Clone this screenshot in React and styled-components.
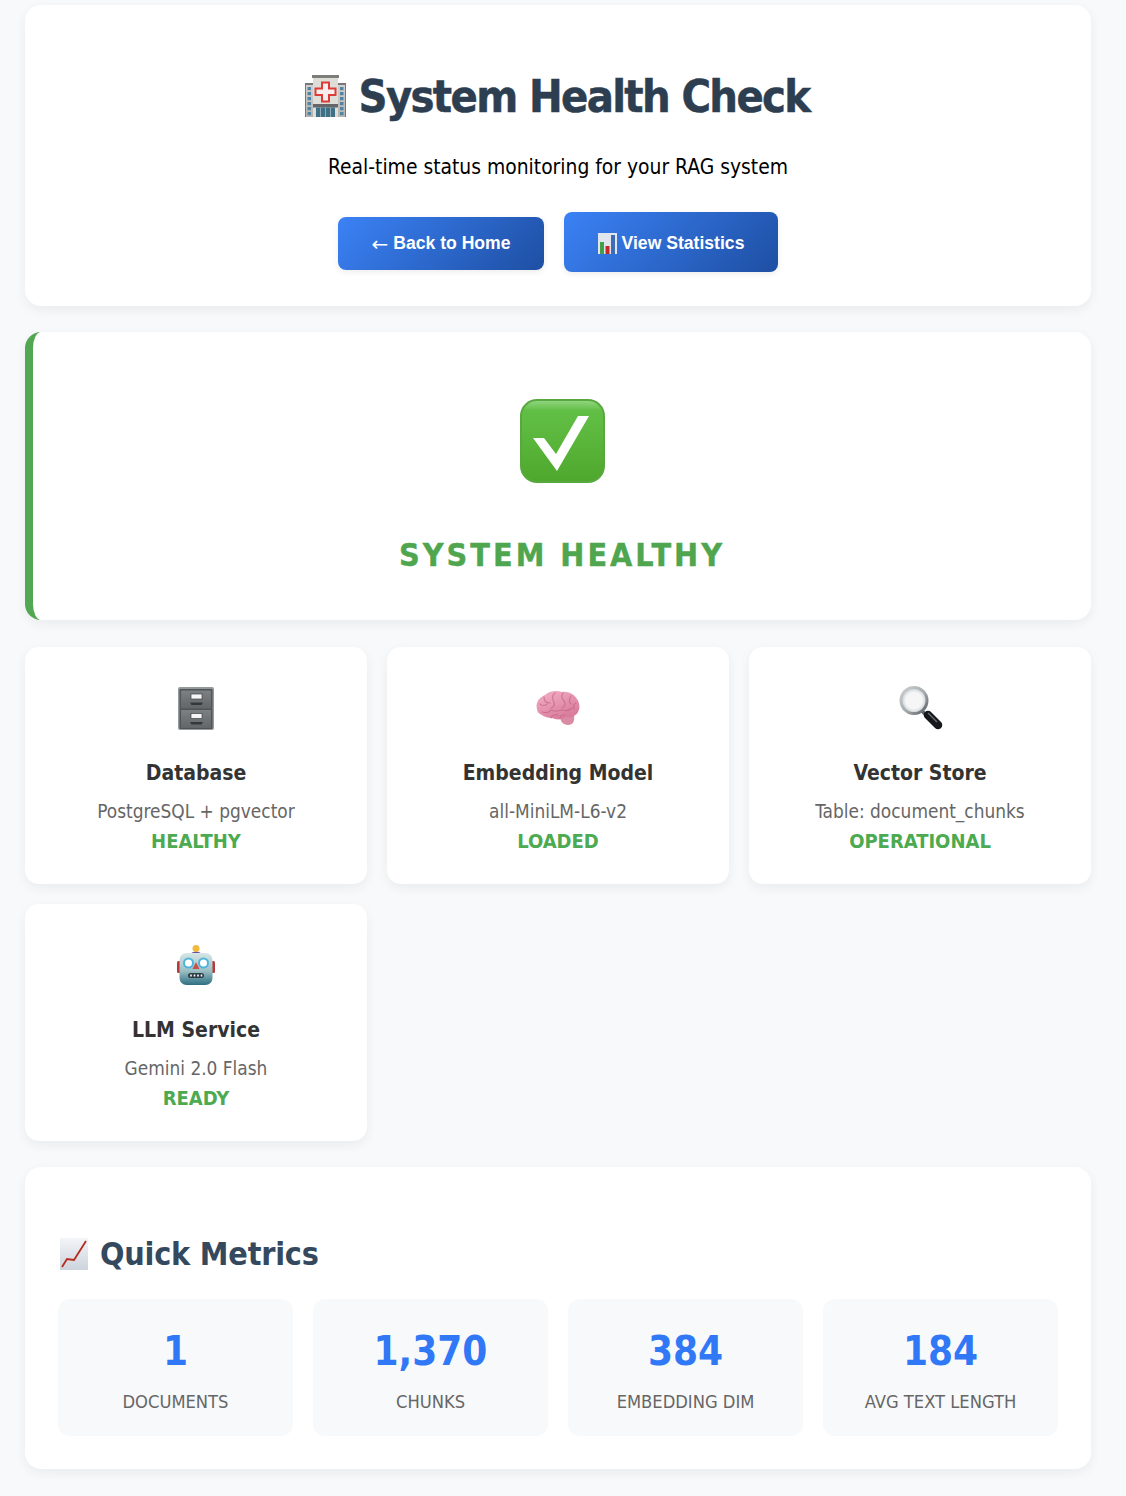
import React from 'react';
import styled, { createGlobalStyle } from 'styled-components';

const Global = createGlobalStyle`
  html, body { margin: 0; padding: 0; background: #f8f9fa; }
  body { font-family: "DejaVu Sans Condensed", "DejaVu Sans", sans-serif; color: #333; }
`;
const Page = styled.div`
  padding: 5px 35px 27px 25px;
  display: flex;
  flex-direction: column;
`;
const Card = styled.section`
  background: #fff;
  border-radius: 16px;
  box-shadow: 0 4px 12px rgba(0,0,0,.06);
`;
const Header = styled(Card)`
  height: 301px;
  box-sizing: border-box;
  padding: 63px 0 0;
  margin-bottom: 26px;
  text-align: center;
`;
const Title = styled.h1`
  margin: 0;
  padding-right: 4px;
  font-size: 44.8px;
  line-height: 58px;
  font-weight: 700;
  letter-spacing: -1.65px;
  -webkit-text-stroke: 0.5px #2c3e50;
  color: #2c3e50;
  display: flex;
  justify-content: center;
  align-items: center;
  gap: 12px;
`;
const Subtitle = styled.p`
  margin: 28px 0 0;
  font-size: 20.85px;
  line-height: 26px;
  color: #000;
`;
const Actions = styled.div`
  margin-top: 32px;
  display: flex;
  justify-content: center;
  align-items: flex-start;
  gap: 20px;
`;
const Button = styled.a`
  display: flex;
  align-items: center;
  justify-content: center;
  gap: 5px;
  box-sizing: border-box;
  width: ${p => p.$w}px;
  height: ${p => p.$h}px;
  margin-top: ${p => p.$top || 0}px;
  padding-top: ${p => p.$pad || 0}px;
  border-radius: 8px;
  background: linear-gradient(135deg, #3b82f6, #1e4fa3);
  color: #fff;
  font-family: "Liberation Sans", Arial, sans-serif;
  font-weight: 700;
  font-size: 17.6px;
  box-shadow: 0 2px 6px rgba(0,0,0,.08);
`;
const Arrow = styled.span`
  font-family: "DejaVu Sans", sans-serif;
  font-weight: 400;
  font-size: 20px;
  line-height: 1;
`;
const StatusCard = styled(Card)`
  height: 288px;
  box-sizing: border-box;
  border-left: 8px solid #52a852;
  padding-top: 67px;
  margin-bottom: 27px;
  display: flex;
  flex-direction: column;
  align-items: center;
`;
const StatusIcon = styled.div`
  margin-left: 2px;
  height: 85px;
`;
const StatusTitle = styled.h2`
  margin: 51px 0 0;
  font-size: 32px;
  line-height: 40px;
  letter-spacing: 3px;
  font-weight: 700;
  -webkit-text-stroke: 0.4px #4fa64f;
  color: #4fa64f;
  text-transform: uppercase;
`;
const Services = styled.div`
  display: grid;
  grid-template-columns: repeat(3, 1fr);
  gap: 20px;
  margin-bottom: 26px;
`;
const ServiceCard = styled(Card)`
  height: 237px;
  box-sizing: border-box;
  padding-top: 38px;
  display: flex;
  flex-direction: column;
  align-items: center;
  border-radius: 14px;
`;
const IconSlot = styled.div`
  height: 46px;
  display: flex;
  align-items: center;
  justify-content: center;
`;
const ServiceName = styled.h3`
  margin: 29px 0 0;
  font-size: 21px;
  line-height: 27px;
  font-weight: 700;
  color: #333;
`;
const ServiceDetail = styled.div`
  margin-top: 13px;
  font-size: 18.9px;
  line-height: 23px;
  color: #666;
`;
const ServiceState = styled.div`
  margin-top: 7px;
  font-size: 20px;
  line-height: 23px;
  font-weight: 700;
  color: #4caa50;
`;
const Metrics = styled(Card)`
  height: 302px;
  box-sizing: border-box;
  padding: 66px 33px 33px;
`;
const MetricsTitle = styled.h2`
  margin: 0 0 24px;
  font-size: 32px;
  line-height: 42px;
  font-weight: 700;
  letter-spacing: -0.2px;
  color: #34495e;
  display: flex;
  align-items: center;
  gap: 12px;
`;
const TitleIcon = styled.span`
  display: flex;
  margin-left: 2px;
`;
const MetricGrid = styled.div`
  display: grid;
  grid-template-columns: repeat(4, 1fr);
  gap: 20px;
`;
const Metric = styled.div`
  background: #f8f9fa;
  border-radius: 12px;
  height: 137px;
  box-sizing: border-box;
  padding-top: 27px;
  text-align: center;
`;
const MetricValue = styled.div`
  font-size: 40px;
  line-height: 50px;
  font-weight: 700;
  color: #3178f6;
`;
const MetricLabel = styled.div`
  margin-top: 14px;
  font-size: 18.2px;
  line-height: 23px;
  color: #666;
  text-transform: uppercase;
`;

const Hospital = () => (
  <svg width="44" height="44" viewBox="0 0 44 44">
    <defs><linearGradient id="hb" x1="0" y1="0" x2="0" y2="1"><stop offset="0" stopColor="#d2d1cd"/><stop offset="1" stopColor="#b5b3ae"/></linearGradient></defs>
    <rect x="2" y="8" width="41" height="34" fill="#77777a"/>
    <rect x="3" y="10" width="39" height="32" fill="url(#hb)"/>
    <rect x="9" y="0" width="27" height="3" fill="#7d7d7a"/>
    <rect x="10" y="3" width="25" height="39" fill="#dfddd8"/>
    <path d="M19 7.500h7v6h6.500v6.500H26v6.500h-7V20h-6.500v-6.500H19z" fill="#f6eeee" stroke="#dd3b37" strokeWidth="2"/>
    <rect x="10" y="29" width="25" height="3.500" fill="#66666a"/>
    <rect x="13" y="32.500" width="19" height="9.500" fill="#3f7186"/>
    <path d="M17.500 32.500V42M22.500 32.500V42M27.500 32.500V42" stroke="#98b3bb" strokeWidth=".9"/>
    {[12, 17, 22, 27, 32, 37].map(y => <g key={y}><rect x="4.500" y={y} width="3.500" height="3.200" fill="#4f84a6"/><rect x="37" y={y} width="3.500" height="3.200" fill="#4f84a6"/></g>)}
  </svg>
);
const BarChart = () => (
  <svg width="19" height="21" viewBox="0 0 19 21">
    <rect width="19" height="21" fill="#dfe6ee"/>
    <rect x="2" y="9" width="4" height="12" fill="#43a047"/>
    <rect x="7.500" y="13" width="4" height="8" fill="#c62828"/>
    <rect x="13" y="2" width="4" height="19" fill="#3f6cb5"/>
  </svg>
);
const CheckBox = () => (
  <svg width="86" height="85" viewBox="0 0 86 85">
    <defs><linearGradient id="cg" x1="0" y1="0" x2="0" y2="1"><stop offset="0" stopColor="#8fd47e"/><stop offset=".12" stopColor="#62bf45"/><stop offset="1" stopColor="#4fa82e"/></linearGradient></defs>
    <rect x="0" y="0" width="85" height="84" rx="17" fill="#58a83f"/>
    <rect x="2" y="2" width="81" height="80" rx="15" fill="url(#cg)"/>
    <path d="M13 39H24L36 55L58 17H69L37 72Z" fill="#fff"/>
  </svg>
);
const Cabinet = () => (
  <svg width="36" height="43" viewBox="0 0 36 43">
    <defs><linearGradient id="cb" x1="0" y1="0" x2="0" y2="1"><stop offset="0" stopColor="#7c8082"/><stop offset="1" stopColor="#626668"/></linearGradient></defs>
    <rect width="36" height="43" rx="2" fill="#94999c"/>
    <rect x="1.500" y="2" width="33" height="40" rx="1" fill="#505456"/>
    {[3.500, 23].map(y => (
      <g key={y}>
        <rect x="3" y={y} width="30" height="18" fill="url(#cb)"/>
        <rect x="13" y={y + 3.500} width="11" height="5" fill="#f6f6f6" stroke="#3f4345" strokeWidth=".7"/>
        <path d={`M12 ${y + 12}h13l-1.500 2.500h-10z`} fill="#34383a"/>
      </g>
    ))}
  </svg>
);
const Brain = () => (
  <svg width="44" height="36" viewBox="0 0 44 36">
    <defs><linearGradient id="br" x1="0" y1="0" x2=".6" y2="1"><stop offset="0" stopColor="#f3b2c6"/><stop offset="1" stopColor="#d97b9b"/></linearGradient></defs>
    <path d="M24 26c0 5 3 9 8 9s7-4 6-10z" fill="#d98ba3"/>
    <path d="M1 19C-1 12 4 7 9 5c4-4 11-5 17-3 6-1 12 2 15 7 3 4 3 10 1 13-2 4-7 6-12 5-4 3-10 3-14 1-3 0-8-1-10-3-3-1-5-3-5-6z" fill="url(#br)"/>
    <g fill="none" stroke="#c4668a" strokeWidth="1.200" strokeLinecap="round" opacity=".7">
      <path d="M8 7c0 4 2 6 6 6M19 3c-3 2-3 6-1 9 1 3 0 5-3 6"/>
      <path d="M27 3c-2 3-1 6 1 8s1 6-2 7M35 6c-2 3-2 6 0 8M40 13c-2 1-3 3-2 6"/>
      <path d="M4 14c2 2 5 2 7 0M6 22c3 1 7 1 9-2 4 2 8 1 11 0 3 1 7 1 10-2"/>
      <path d="M15 28c1-3 4-4 7-3M24 28c0-2 2-3 5-3"/>
    </g>
  </svg>
);
const Magnifier = () => (
  <svg width="46" height="44" viewBox="0 0 46 44">
    <defs>
      <linearGradient id="mr" x1="0" y1="0" x2="1" y2="1"><stop offset="0" stopColor="#d0d4d6"/><stop offset=".55" stopColor="#a3a9ad"/><stop offset="1" stopColor="#50565b"/></linearGradient>
      <radialGradient id="ml"><stop offset=".7" stopColor="#f6f6f7"/><stop offset="1" stopColor="#d4d8da"/></radialGradient>
    </defs>
    <path d="M25 25l5 5" stroke="#5a6066" strokeWidth="3.500"/>
    <path d="M31 29l10 10" stroke="#15171a" strokeWidth="8.500" strokeLinecap="round"/>
    <path d="M31 27l9 9" stroke="#6a7076" strokeWidth="1.200"/>
    <circle cx="17" cy="14.500" r="14.500" fill="url(#mr)"/>
    <circle cx="17" cy="14.500" r="11.500" fill="url(#ml)"/>
  </svg>
);
const Robot = () => (
  <svg width="38" height="40" viewBox="0 0 38 40">
    <defs><linearGradient id="rf" x1="0" y1="0" x2="0" y2="1"><stop offset="0" stopColor="#d6e6e6"/><stop offset=".55" stopColor="#9dc0c4"/><stop offset="1" stopColor="#2e6e82"/></linearGradient></defs>
    <circle cx="19" cy="3.500" r="3.500" fill="#f2b93c"/>
    <path d="M14 9c0-3 10-3 10 0v1H14z" fill="#6a4f9c"/>
    <rect x="0" y="16" width="4" height="12" rx="1.500" fill="#b33a3a"/>
    <rect x="34" y="16" width="4" height="12" rx="1.500" fill="#b33a3a"/>
    <rect x="2.500" y="8" width="33" height="32" rx="7" fill="url(#rf)"/>
    <circle cx="11.500" cy="18" r="4.500" fill="#fff" stroke="#4fb4dc" strokeWidth="2"/>
    <circle cx="26.500" cy="18" r="4.500" fill="#fff" stroke="#4fb4dc" strokeWidth="2"/>
    <path d="M19 17l3.500 7h-7z" fill="#c9504a"/>
    <rect x="11" y="28" width="16" height="5" rx="2.500" fill="#2d3e46"/>
    <path d="M14 29.500v2M17.500 29.500v2M21 29.500v2M24.500 29.500v2" stroke="#fff" strokeWidth="1.600"/>
  </svg>
);
const LineChart = () => (
  <svg width="28" height="32" viewBox="0 0 28 32">
    <defs><linearGradient id="lc" x1="0" y1="0" x2="0" y2="1"><stop offset="0" stopColor="#f3f5f8"/><stop offset="1" stopColor="#cdd3dc"/></linearGradient></defs>
    <rect width="28" height="32" fill="url(#lc)"/>
    <path d="M2 29l5-8 7 1L26 3" stroke="#b72a1e" strokeWidth="1.800" fill="none"/>
  </svg>
);

const services = [
  { icon: <Cabinet />, name: 'Database', detail: 'PostgreSQL + pgvector', state: 'HEALTHY' },
  { icon: <Brain />, name: 'Embedding Model', detail: 'all-MiniLM-L6-v2', state: 'LOADED' },
  { icon: <Magnifier />, name: 'Vector Store', detail: 'Table: document_chunks', state: 'OPERATIONAL' },
  { icon: <Robot />, name: 'LLM Service', detail: 'Gemini 2.0 Flash', state: 'READY' },
];
const metrics = [
  ['1', 'Documents'], ['1,370', 'Chunks'], ['384', 'Embedding Dim'], ['184', 'Avg Text Length'],
];

export default function App() {
  return (
    <>
      <Global />
      <Page>
        <Header>
          <Title><Hospital />System Health Check</Title>
          <Subtitle>Real-time status monitoring for your RAG system</Subtitle>
          <Actions>
            <Button $w={206} $h={53} $top={5}><Arrow>←</Arrow>Back to Home</Button>
            <Button $w={214} $h={60} $pad={2}><BarChart />View Statistics</Button>
          </Actions>
        </Header>
        <StatusCard>
          <StatusIcon><CheckBox /></StatusIcon>
          <StatusTitle>System Healthy</StatusTitle>
        </StatusCard>
        <Services>
          {services.map(s => (
            <ServiceCard key={s.name}>
              <IconSlot>{s.icon}</IconSlot>
              <ServiceName>{s.name}</ServiceName>
              <ServiceDetail>{s.detail}</ServiceDetail>
              <ServiceState>{s.state}</ServiceState>
            </ServiceCard>
          ))}
        </Services>
        <Metrics>
          <MetricsTitle><TitleIcon><LineChart /></TitleIcon>Quick Metrics</MetricsTitle>
          <MetricGrid>
            {metrics.map(([v, l]) => (
              <Metric key={l}>
                <MetricValue>{v}</MetricValue>
                <MetricLabel>{l}</MetricLabel>
              </Metric>
            ))}
          </MetricGrid>
        </Metrics>
      </Page>
    </>
  );
}
